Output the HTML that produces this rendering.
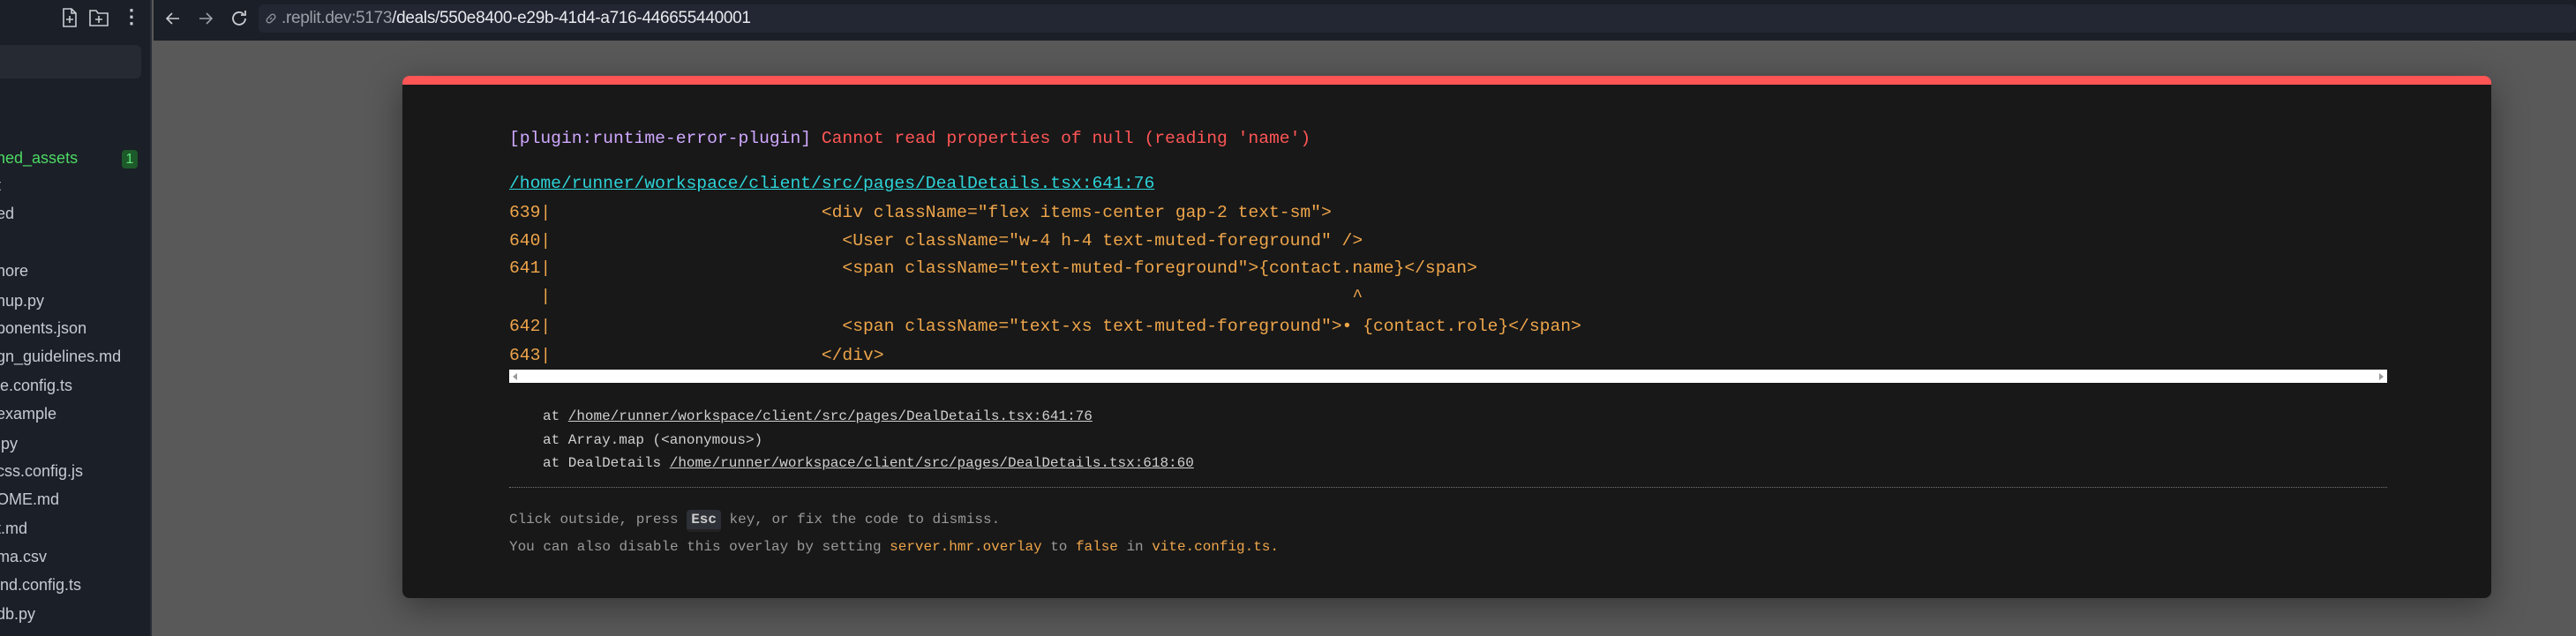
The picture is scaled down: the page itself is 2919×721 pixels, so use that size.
<!DOCTYPE html>
<html><head><meta charset="utf-8"><style>
*{margin:0;padding:0;box-sizing:border-box}
body{width:2919px;height:721px;overflow:hidden;background:#595959;position:relative;font-family:"Liberation Sans",sans-serif}
#side{position:absolute;left:0;top:0;width:172px;height:721px;background:#1b1f27;border-right:2px solid #2a2e37}
#top{position:absolute;left:174px;top:0;right:0;height:46px;background:#1b1f27}
.ic{position:absolute;color:#c8ccd2}
#url{position:absolute;left:293px;top:5px;width:2626px;height:32px;background:#232733;border-radius:6px}
#url>span{position:absolute;left:26px;top:5px;font-size:19px;color:#e8eaee;letter-spacing:-0.3px;white-space:nowrap}
.f{position:absolute;left:-4px;font-size:18px;color:#c5cad3;white-space:nowrap}
#modal{position:absolute;left:456px;top:86px;width:2367px;height:592px;background:#181818;border-radius:8px;border-top:10px solid #ff5555;box-shadow:0 10px 40px rgba(0,0,0,.4)}
.m{position:absolute;font-family:"Liberation Mono",monospace;white-space:pre;font-size:19.7px;letter-spacing:-0.02px}
.s{font-size:16px}
.o{color:#eea54a}
</style></head><body>
<div id="side">
 <svg class="ic" style="left:68px;top:8px" width="22" height="24" viewBox="0 0 22 24" fill="none" stroke="#c8ccd2" stroke-width="1.6"><path d="M4 2h9l5 5v15H4z M13 2v5h5 M11 10v8 M7 14h8"/></svg>
 <svg class="ic" style="left:100px;top:8px" width="24" height="24" viewBox="0 0 24 24" fill="none" stroke="#c8ccd2" stroke-width="1.6"><path d="M2 4h7l2 3h11v14H2z M12 10v8 M8 14h8"/></svg>
 <div class="ic" style="left:138px;top:6px;font-size:22px;font-weight:bold">&#8942;</div>
 <div style="position:absolute;left:0;top:51px;width:160px;height:38px;background:#262a33;border-radius:0 6px 6px 0"></div>
 <div class="f" style="top:169px;color:#4cd964">hed_assets</div>
 <div style="position:absolute;left:138px;top:170px;width:18px;height:21px;background:#1d5a2a;border-radius:4px;color:#5ee37a;font-size:16px;text-align:center;line-height:21px">1</div>
 <div class="f" style="top:200px">t</div>
 <div class="f" style="top:232px">ed</div>
 <div class="f" style="top:297px">nore</div>
 <div class="f" style="top:331px">nup.py</div>
 <div class="f" style="top:362px">ponents.json</div>
 <div class="f" style="top:394px">gn_guidelines.md</div>
 <div class="f" style="top:427px">le.config.ts</div>
 <div class="f" style="top:459px">example</div>
 <div class="f" style="top:493px">.py</div>
 <div class="f" style="top:524px">css.config.js</div>
 <div class="f" style="top:556px">OME.md</div>
 <div class="f" style="top:589px">t.md</div>
 <div class="f" style="top:621px">ma.csv</div>
 <div class="f" style="top:653px">ind.config.ts</div>
 <div class="f" style="top:686px">db.py</div>
</div>
<div id="top"></div>
<svg class="ic" style="left:185px;top:10px" width="22" height="22" viewBox="0 0 22 22" fill="none" stroke="#c8ccd2" stroke-width="1.6"><path d="M18 11H4 M10 5l-6 6 6 6"/></svg>
<svg class="ic" style="left:222px;top:10px" width="22" height="22" viewBox="0 0 22 22" fill="none" stroke="#9aa0a8" stroke-width="1.6"><path d="M4 11h14 M12 5l6 6-6 6"/></svg>
<svg class="ic" style="left:259px;top:9px" width="24" height="24" viewBox="0 0 24 24" fill="none" stroke="#c8ccd2" stroke-width="1.8"><path d="M19 12a7 7 0 1 1-2-5 M19 3v5h-5"/></svg>
<div id="url"><svg style="position:absolute;left:6px;top:8px" width="16" height="16" viewBox="0 0 16 16" fill="none" stroke="#8a9099" stroke-width="1.4"><path d="M7 9l2-2 M6 6l-2 2a2.5 2.5 0 0 0 4 4l2-2 M10 10l2-2a2.5 2.5 0 0 0-4-4L6 6"/></svg><span><span style="color:#9aa0a8">.replit.dev:5173</span>/deals/550e8400-e29b-41d4-a716-446655440001</span></div>
<div id="modal">
 <div class="m" style="left:121px;top:50px"><span style="color:#cfa8ff">[plugin:runtime-error-plugin]</span> <span style="color:#ff5555">Cannot read properties of null (reading 'name')</span></div>
 <div class="m" style="left:121px;top:101px;color:#2dd4d8;text-decoration:underline">/home/runner/workspace/client/src/pages/DealDetails.tsx:641:76</div>
 <div class="m o" style="left:121px;top:134px">639|                          &lt;div className="flex items-center gap-2 text-sm"&gt;</div>
 <div class="m o" style="left:121px;top:166px">640|                            &lt;User className="w-4 h-4 text-muted-foreground" /&gt;</div>
 <div class="m o" style="left:121px;top:197px">641|                            &lt;span className="text-muted-foreground"&gt;{contact.name}&lt;/span&gt;</div>
 <div class="m o" style="left:121px;top:229px">   |                                                                             ^</div>
 <div class="m o" style="left:121px;top:263px">642|                            &lt;span className="text-xs text-muted-foreground"&gt;• {contact.role}&lt;/span&gt;</div>
 <div class="m o" style="left:121px;top:296px">643|                          &lt;/div&gt;</div>
 <div style="position:absolute;left:121px;top:323px;width:2128px;height:15px;background:#fff"><div style="position:absolute;left:4px;top:4px;border:4px solid transparent;border-right:5px solid #999;border-left:0"></div><div style="position:absolute;right:4px;top:4px;border:4px solid transparent;border-left:5px solid #999;border-right:0"></div></div>
 <div class="m s" style="left:159px;top:367px;color:#d0d0d0">at <u>/home/runner/workspace/client/src/pages/DealDetails.tsx:641:76</u></div>
 <div class="m s" style="left:159px;top:394px;color:#d0d0d0">at Array.map (&lt;anonymous&gt;)</div>
 <div class="m s" style="left:159px;top:420px;color:#d0d0d0">at DealDetails <u>/home/runner/workspace/client/src/pages/DealDetails.tsx:618:60</u></div>
 <div style="position:absolute;left:121px;top:456px;width:2128px;border-top:1px dotted #777"></div>
 <div class="m s" style="left:121px;top:484px;color:#999">Click outside, press <span style="background:#2d3036;color:#ccc;font-weight:bold;border-radius:4px;padding:2px 5px;border-bottom:3px solid #222">Esc</span> key, or fix the code to dismiss.</div>
 <div class="m s" style="left:121px;top:515px;color:#999">You can also disable this overlay by setting <span class="o">server.hmr.overlay</span> to <span class="o">false</span> in <span class="o">vite.config.ts.</span></div>
</div>
</body></html>
